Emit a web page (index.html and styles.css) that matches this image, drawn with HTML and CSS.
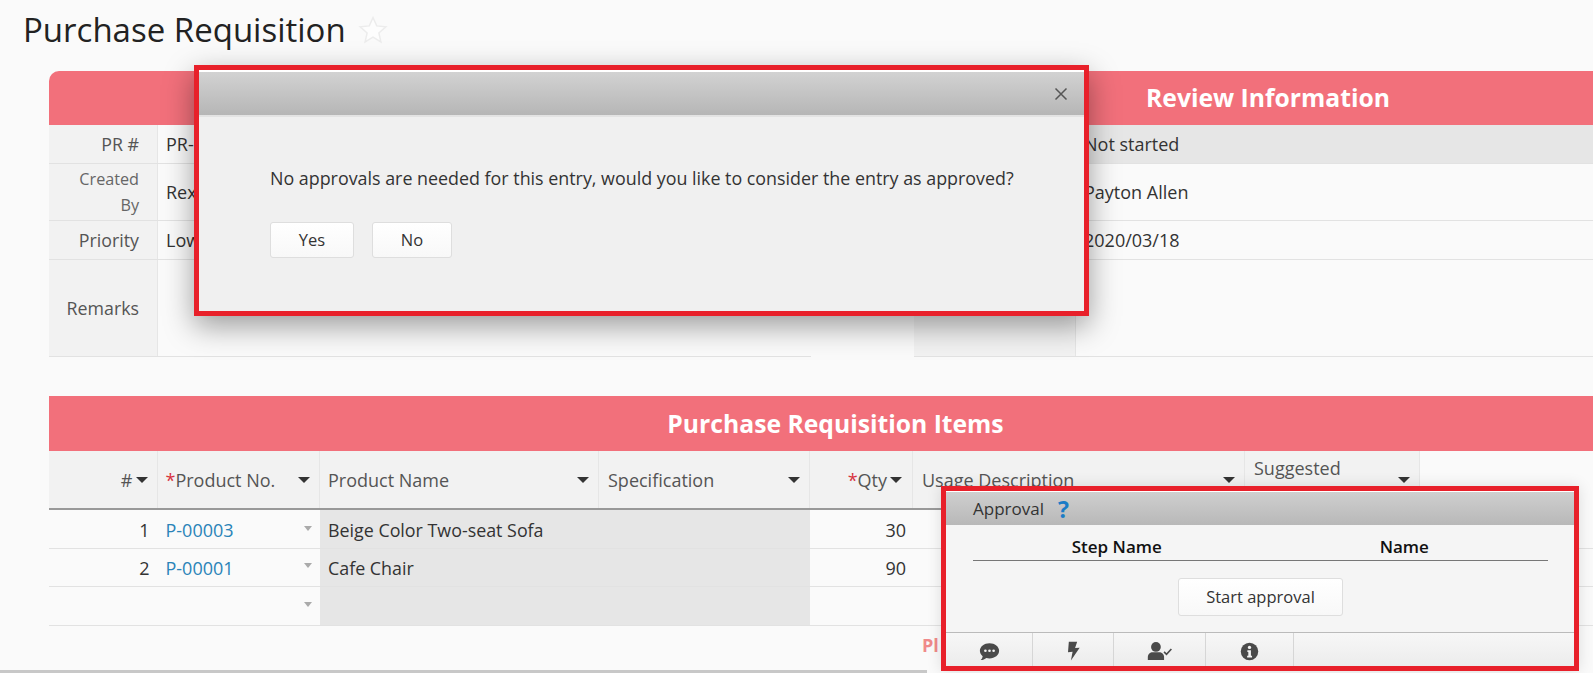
FILE: index.html
```html
<!DOCTYPE html>
<html lang="en">
<head>
<meta charset="utf-8">
<title>Purchase Requisition</title>
<link rel="stylesheet" href="styles.css">
</head>
<body>
<main class="page">
  <header class="title-bar">
    <h1 class="title">Purchase Requisition</h1>
    <svg class="star" viewBox="0 0 30 30"><path d="M15 2.500l3.700 8.400 9.100.9-6.900 6.100 2 9-7.900-4.700-7.900 4.700 2-9-6.900-6.100 9.100-.9z"/></svg>
  </header>

  <div class="forms">
    <section class="form form-left">
      <div class="band band-round"></div>
      <div class="row row-s"><div class="label">PR #</div><div class="value">PR-</div></div>
      <div class="row row-l"><div class="label label-wrap">Created By</div><div class="value">Rex</div></div>
      <div class="row row-s"><div class="label">Priority</div><div class="value">Low</div></div>
      <div class="row row-xl"><div class="label">Remarks</div><div class="value"></div></div>
    </section>
    <section class="form form-right">
      <h2 class="band">Review Information</h2>
      <div class="row row-s"><div class="label"></div><div class="value value-ro">Not started</div></div>
      <div class="row row-l"><div class="label"></div><div class="value">Payton Allen</div></div>
      <div class="row row-s"><div class="label"></div><div class="value">2020/03/18</div></div>
      <div class="row row-xl"><div class="label"></div><div class="value"></div></div>
    </section>
  </div>

  <section class="items">
    <h2 class="band band-items">Purchase Requisition Items</h2>
    <div class="grid grid-head">
      <div class="th th-right"><span>#</span><i class="arrow"></i></div>
      <div class="th th-between"><span><b class="req">*</b>Product No.</span><i class="arrow"></i></div>
      <div class="th th-between"><span>Product Name</span><i class="arrow"></i></div>
      <div class="th th-between"><span>Specification</span><i class="arrow"></i></div>
      <div class="th th-right"><span><b class="req">*</b>Qty</span><i class="arrow"></i></div>
      <div class="th th-between"><span>Usage Description</span><i class="arrow"></i></div>
      <div class="th th-between th-two"><span>Suggested</span><i class="arrow"></i></div>
    </div>
    <div class="grid grid-row grid-row-first">
      <div class="td td-right">1</div>
      <div class="td td-link"><a>P-00003</a><i class="caret"></i></div>
      <div class="td td-ro">Beige Color Two-seat Sofa</div>
      <div class="td td-ro"></div>
      <div class="td td-right">30</div>
      <div class="td"></div><div class="td"></div>
    </div>
    <div class="grid grid-row grid-row-short">
      <div class="td td-right">2</div>
      <div class="td td-link"><a>P-00001</a><i class="caret"></i></div>
      <div class="td td-ro">Cafe Chair</div>
      <div class="td td-ro"></div>
      <div class="td td-right">90</div>
      <div class="td"></div><div class="td"></div>
    </div>
    <div class="grid grid-row">
      <div class="td"></div>
      <div class="td td-link"><a></a><i class="caret"></i></div>
      <div class="td td-ro"></div>
      <div class="td td-ro"></div>
      <div class="td"></div>
      <div class="td"></div><div class="td"></div>
    </div>
    <p class="notice">Pl</p>
  </section>
</main>
<div class="scroll-bar"></div>

<div class="callout modal-box">
  <div class="modal">
    <div class="modal-head">
      <svg class="close" viewBox="0 0 14 14"><path d="M1.500 1.500l11 11M12.500 1.500l-11 11"/></svg>
    </div>
    <div class="modal-body">
      <p class="modal-text">No approvals are needed for this entry, would you like to consider the entry as approved?</p>
      <div class="modal-actions">
        <button class="btn btn-yes">Yes</button>
        <button class="btn btn-no">No</button>
      </div>
    </div>
  </div>
</div>

<div class="callout approval-box">
  <div class="approval">
    <div class="approval-head"><span>Approval</span><b class="help">?</b></div>
    <div class="approval-body">
      <div class="steps"><div>Step Name</div><div>Name</div></div>
      <div class="start-wrap"><button class="btn btn-start">Start approval</button></div>
    </div>
    <div class="toolbar">
      <div class="tool tool-1">
        <svg class="i-chat" viewBox="0 0 24 24"><path class="ic" d="M12 2.500C5.900 2.500 1 6.400 1 11.200c0 2.400 1.200 4.500 3.200 6.100-.2 1.800-1.100 3.200-2.300 4.500 2.600-.1 4.800-1 6.500-2.400 1.100.3 2.300.5 3.600.5 6.100 0 11-3.900 11-8.700S18.100 2.500 12 2.500z"/><circle class="ic-cut" cx="7.300" cy="11.200" r="1.500"/><circle class="ic-cut" cx="12" cy="11.200" r="1.500"/><circle class="ic-cut" cx="16.700" cy="11.200" r="1.500"/></svg>
      </div>
      <div class="tool tool-2">
        <svg class="i-bolt" viewBox="0 0 24 24"><path class="ic" d="M7 1h10l-2.500 7.500L20 8 9.500 23.500 11.500 13 6 13.500z"/></svg>
      </div>
      <div class="tool tool-3">
        <svg class="i-user" viewBox="0 0 32 24"><circle class="ic" cx="11" cy="7" r="6"/><path class="ic" d="M1 23v-3.500C1 15.500 4 13.500 7 13.500h8c3 0 6 2 6 6V23z"/><path class="ic-line" d="M21 13l3 3 6-6.500"/></svg>
      </div>
      <div class="tool tool-4">
        <svg class="i-info" viewBox="0 0 24 24"><circle class="ic" cx="12" cy="12" r="11"/><circle class="ic-cut" cx="12" cy="6.800" r="2.100"/><path class="ic-cut" d="M9.300 10.300h4.500v7h1.400v2.200H9v-2.200h1.500v-4.800H9.300z"/></svg>
      </div>
      <div class="tool tool-5"></div>
    </div>
  </div>
</div>
</body>
</html>
```
FILE: styles.css
```css
* { box-sizing: border-box; }
html, body { margin: 0; height: 673px; overflow: hidden; }
body {
  position: relative;
  background: #fafafa;
  font-family: "Open Sans", "Liberation Sans", sans-serif;
  font-size: 18px;
  color: #333;
}
.page { width: 1622px; padding-left: 49px; }

.title-bar {
  display: flex;
  align-items: center;
  height: 60px;
  margin-left: -26px;
  margin-bottom: 11px;
}
.title { margin: 0; font-size: 33px; font-weight: 400; color: #222; line-height: 60px; }
.star { width: 30px; height: 30px; margin-left: 12px; }
.star path { fill: #fdfdfd; stroke: #ececec; stroke-width: 1.500; }

.band {
  margin: 0;
  height: 54px;
  background: #f2707b;
  color: #fff;
  font-size: 24.700px;
  font-weight: 700;
  line-height: 54px;
  text-align: center;
}
.band-round { border-top-left-radius: 10px; }
.band-items { height: 55px; line-height: 55px; }

.forms { display: flex; gap: 103px; }
.form-left { width: 762px; }
.form-left .row { grid-template-columns: 109px 1fr; }
.form-right { width: 708px; }
.form-right .row { grid-template-columns: 162px 1fr; }

.row { display: grid; border-bottom: 1px solid #e2e2e2; }
.row-s { height: 39px; }
.row-l { height: 57px; }
.row-xl { height: 97px; }
.label {
  display: flex;
  align-items: center;
  justify-content: flex-end;
  padding-right: 18px;
  background: #f2f2f2;
  border-right: 1px solid #e6e6e6;
  color: #555;
  font-size: 17.800px;
  text-align: right;
}
.label-wrap { padding-left: 20px; font-size: 16.200px; line-height: 26px; color: #666; }
.value { display: flex; align-items: center; padding-left: 8px; color: #333; }
.value-ro { background: #e6e6e6; }

.items { margin-top: 39px; width: 1573px; }
.grid {
  display: grid;
  grid-template-columns: 108.500px 162.500px 279px 211px 103px 332px 175px;
}
.grid-head { width: 1371px; height: 59px; border-bottom: 2px solid #999; background: #f2f2f2; }
.th {
  display: flex;
  align-items: center;
  gap: 3px;
  padding: 0 9px 0 8px;
  border-right: 1px solid #e6e6e6;
  color: #555;
  white-space: nowrap;
}
.th:nth-child(n+4) { padding-left: 9px; }
.th:nth-child(5) { padding-right: 10px; }
.th-right { justify-content: flex-end; }
.th-between { justify-content: space-between; }
.th-two { line-height: 24px; padding-bottom: 24px; }
.th-two .arrow { margin-top: 24px; }
.req { color: #d8333f; font-weight: 400; }
.arrow {
  flex: none;
  width: 0;
  height: 0;
  border-left: 6px solid transparent;
  border-right: 6px solid transparent;
  border-top: 6px solid #333;
}
.grid-row { height: 39px; border-bottom: 1px solid #e2e2e2; }
.grid-row-short { height: 38px; }
.grid-row-first .td { padding-top: 2px; }
.td { display: flex; align-items: center; padding: 0 8px; color: #333; min-width: 0; }
.td-right { justify-content: flex-end; }
.td:nth-child(5) { padding-right: 7px; }
.td-ro { background: #e6e6e6; font-size: 17.850px; }
.td-link { justify-content: space-between; padding-right: 8px; }
.td-link a { color: #2a84b8; }
.caret {
  margin-left: auto;
  margin-bottom: 4px;
  width: 0;
  height: 0;
  border-left: 4.500px solid transparent;
  border-right: 4.500px solid transparent;
  border-top: 5px solid #aaa;
}
.notice {
  margin: 7px 0 0 873px;
  color: #f08a8a;
  font-weight: 700;
  line-height: 24px;
}

.scroll-bar {
  position: absolute;
  left: 0;
  bottom: 0;
  width: 927px;
  height: 3px;
  background: #c8c8c8;
}

.callout {
  position: absolute;
  border: 5px solid #e8202a;
  padding-top: 2px;
  background: #fff;
  z-index: 5;
}
.modal-box {
  left: 194px;
  top: 65px;
  width: 895px;
  height: 251px;
  box-shadow: 0 10px 28px rgba(0, 0, 0, .38);
}
.modal { display: flex; flex-direction: column; height: 100%; background: #f0f0f0; }
.modal-head {
  display: flex;
  align-items: center;
  justify-content: flex-end;
  flex: none;
  height: 45px;
  padding-right: 16px;
  background: linear-gradient(#d2d2d2, #b6b6b6);
  border-bottom: 2px solid #e3e3e3;
}
.close { width: 14px; height: 14px; }
.close path { stroke: #555; stroke-width: 1.500; fill: none; }
.modal-body { padding: 49px 0 0 71px; }
.modal-text { margin: 0; font-size: 17.880px; line-height: 24px; color: #333; }
.modal-actions { display: flex; gap: 18px; margin-top: 32px; }
.btn {
  height: 36px;
  padding: 0 0 2px;
  font-family: inherit;
  font-size: 16.500px;
  color: #333;
  background: linear-gradient(#fff, #f8f8f8);
  border: 1px solid #dedede;
  border-radius: 3px;
}
.btn-yes { width: 84px; }
.btn-no { width: 80px; }

.approval-box {
  left: 941px;
  top: 486px;
  width: 638px;
  height: 185px;
  padding-top: 1px;
  box-shadow: 0 0 14px rgba(0, 0, 0, .12);
}
.approval { display: flex; flex-direction: column; height: 100%; background: #f5f5f5; }
.approval-head {
  display: flex;
  align-items: center;
  flex: none;
  gap: 14px;
  height: 33px;
  padding-left: 27px;
  background: linear-gradient(#cfcfcf, #b8b8b8);
  font-size: 17px;
  color: #333;
}
.help { color: #1b7cc6; font-size: 23px; font-weight: 700; line-height: 24px; }
.approval-body { flex: 1; padding: 0 26px 0 27px; }
.steps {
  display: grid;
  grid-template-columns: 1fr 1fr;
  height: 36px;
  border-bottom: 1px solid #777;
  color: #111;
  font-size: 17px;
  font-weight: 600;
  line-height: 43px;
  text-align: center;
}
.start-wrap { display: flex; justify-content: center; padding: 17px 0 0; }
.btn-start { width: 165px; height: 38px; }
.toolbar {
  display: flex;
  flex: none;
  height: 34px;
  border-top: 1px solid #bbb;
  background: linear-gradient(#f7f7f7, #ececec);
}
.tool {
  display: flex;
  align-items: center;
  justify-content: center;
  padding-top: 3px;
  border-right: 1px solid #d6d6d6;
}
.tool-1 { width: 87px; }
.tool-2 { width: 81px; }
.tool-3 { width: 92px; }
.tool-4 { width: 88px; }
.tool-5 { flex: 1; border-right: 0; }
.i-chat { width: 21px; height: 21px; }
.i-bolt { width: 20px; height: 20px; }
.i-user { width: 26px; height: 20px; }
.i-info { width: 19px; height: 19px; }
.ic { fill: #4a4a4a; }
.ic-cut { fill: #f4f4f4; }
.ic-line { fill: none; stroke: #4a4a4a; stroke-width: 2; }
```
